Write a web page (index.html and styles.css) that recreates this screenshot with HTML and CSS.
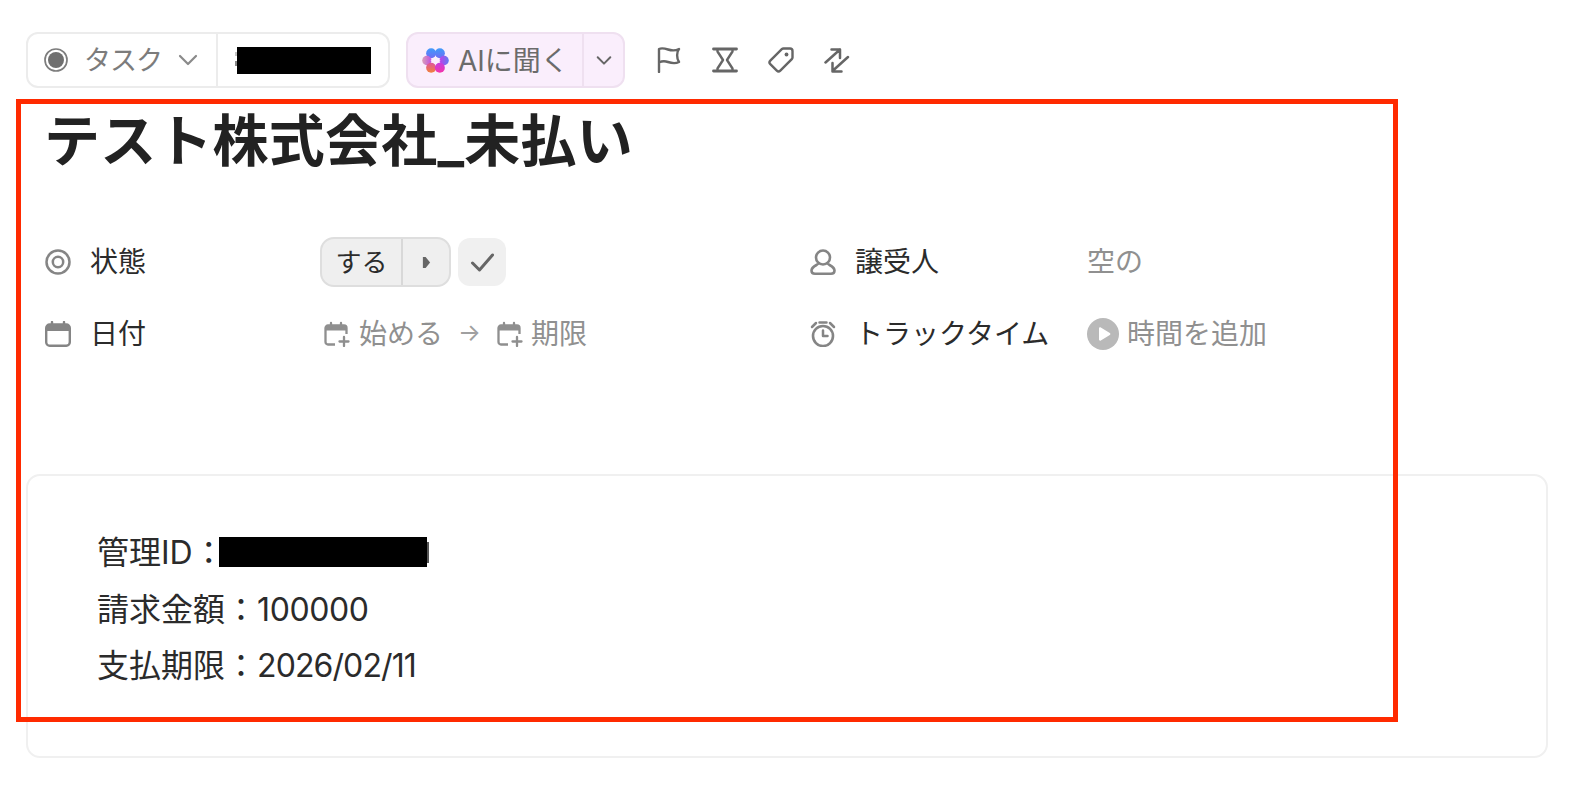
FILE: index.html
```html
<!DOCTYPE html>
<html lang="ja">

<head>
    <meta charset="UTF-8">
    <title>テスト株式会社_未払い</title>
    <link rel="stylesheet" href="styles.css">
</head>

<body>
    <div class="page">
        <div class="toolbar">
            <div class="group">
                <div class="group-main type-part">
                    <svg class="type-icon" viewBox="0 0 24 24"><circle cx="12" cy="12" r="11" fill="none" stroke="#7d7d7d" stroke-width="1.7"/><circle cx="12" cy="12" r="8" fill="#6f6f6f"/></svg>
                    <span class="type-text">タスク</span>
                    <svg class="chevron" viewBox="0 0 22 22"><path d="M3 7l8 8 8-8" fill="none" stroke="#8a8a8a" stroke-width="2.2" stroke-linecap="round" stroke-linejoin="round"/></svg>
                </div>
                <div class="group-id"><span class="redact redact-id"></span></div>
            </div>

            <div class="group group-ai">
                <div class="group-main ai-part">
                    <svg class="ai-icon" viewBox="0 0 28 28">
                        <defs>
                            <linearGradient id="petal-top" x1="0" y1="0" x2="0" y2="1"><stop offset="0" stop-color="#3f9bfa"/><stop offset="1" stop-color="#6f6cf5"/></linearGradient>
                            <linearGradient id="petal-left" x1="0" y1="0" x2="1" y2="0"><stop offset="0" stop-color="#d9a0b8"/><stop offset="1" stop-color="#c04fe0"/></linearGradient>
                            <linearGradient id="petal-right" x1="0" y1="0" x2="1" y2="0"><stop offset="0" stop-color="#c23fe8"/><stop offset="1" stop-color="#5f7cf2"/></linearGradient>
                            <linearGradient id="petal-low" x1="0" y1="0" x2="0" y2="1"><stop offset="0" stop-color="#e0559c"/><stop offset="1" stop-color="#f0823a"/></linearGradient>
                            <linearGradient id="petal-mag" x1="0" y1="0" x2="0" y2="1"><stop offset="0" stop-color="#c43fe0"/><stop offset="1" stop-color="#f534a8"/></linearGradient>
                            <filter id="soft"><feGaussianBlur stdDeviation="0.5"/></filter>
                        </defs>
                        <g filter="url(#soft)">
                            <circle cx="9.5" cy="6.5" r="5.2" fill="url(#petal-top)"/>
                            <circle cx="18.5" cy="6.5" r="5.2" fill="url(#petal-top)"/>
                            <circle cx="5" cy="14" r="4.8" fill="url(#petal-left)"/>
                            <circle cx="23" cy="14" r="4.8" fill="url(#petal-right)"/>
                            <circle cx="9.5" cy="21.5" r="5.2" fill="url(#petal-low)"/>
                            <circle cx="18.5" cy="21.5" r="5.2" fill="url(#petal-mag)"/>
                            <path d="M14 8.5c.6 3.2 2.3 4.9 5.5 5.5-3.2.6-4.9 2.3-5.5 5.5-.6-3.2-2.3-4.9-5.5-5.5 3.2-.6 4.9-2.3 5.5-5.5z" fill="#fbeefc"/>
                        </g>
                    </svg>
                    <span class="ai-text">AIに聞く</span>
                </div>
                <div class="ai-more">
                    <svg class="chevron-sm" viewBox="0 0 20 20"><path d="M3 7l7 7 7-7" fill="none" stroke="#666" stroke-width="2.2" stroke-linecap="round" stroke-linejoin="round"/></svg>
                </div>
            </div>

            <div class="tool-icons">
                <svg class="tool" viewBox="0 0 26 26"><path d="M3 25V2c3-1.500 6-.5 9 .5s8 1 11-.5c-2.500 3-2.500 9 0 13-3 1.500-8 1-11 0s-6-1-9 .5" fill="none" stroke="#666" stroke-width="2.400" stroke-linecap="round" stroke-linejoin="round"/></svg>
                <svg class="tool" viewBox="0 0 26 26"><path d="M1.500 2h23M1.500 24h23" fill="none" stroke="#666" stroke-width="2.800" stroke-linecap="round"/><path d="M5.500 2v2.500L11 13l-5.500 8.500V24M20.500 2v2.500L15 13l5.500 8.500V24" fill="none" stroke="#666" stroke-width="2.400" stroke-linejoin="round"/></svg>
                <svg class="tool" viewBox="0 0 26 26"><path d="M15.500 1.500h6.500a2.500 2.500 0 0 1 2.500 2.500v6.500a2.500 2.500 0 0 1-.7 1.700L12.300 23.700a2.500 2.500 0 0 1-3.500 0l-6.500-6.500a2.500 2.500 0 0 1 0-3.500L13.800 2.200a2.500 2.500 0 0 1 1.700-.7z" fill="none" stroke="#666" stroke-width="2.400" stroke-linejoin="round"/><circle cx="18.500" cy="7.500" r="1.900" fill="#666"/></svg>
                <svg class="tool" viewBox="0 0 26 26"><path d="M1.500 15.500L16 2.500M7.500 2.500H16V11M24 10L8.500 24M8.500 16V24.500H17.500" fill="none" stroke="#666" stroke-width="2.500" stroke-linecap="round" stroke-linejoin="round"/></svg>
            </div>
        </div>

        <h1 class="title">テスト株式会社_未払い</h1>

        <div class="props">
            <div class="prop-label">
                <svg class="prop-icon" viewBox="0 0 26 26"><circle cx="13" cy="13" r="11.500" fill="none" stroke="#858585" stroke-width="2.500"/><circle cx="13" cy="13" r="5.200" fill="none" stroke="#858585" stroke-width="2.500"/></svg>
                <span class="prop-text">状態</span>
            </div>
            <div class="prop-value">
                <div class="status-pill">
                    <span class="status-text"><span class="prop-text">する</span></span>
                    <span class="status-next"><svg class="next-icon" viewBox="0 0 10 12"><path d="M1 0h3l5 6-5 6H1z" fill="#666"/></svg></span>
                </div>
                <div class="status-check">
                    <svg class="check-icon" viewBox="0 0 24 20"><path d="M2 11l7 7L22 3" fill="none" stroke="#666" stroke-width="3" stroke-linecap="round" stroke-linejoin="round"/></svg>
                </div>
            </div>
            <div class="prop-label">
                <svg class="prop-icon" viewBox="0 0 26 26"><circle cx="13" cy="8.500" r="7" fill="none" stroke="#858585" stroke-width="2.600"/><path d="M8.500 14c.2 2-7 3-7 7.500 0 2 1 3.200 3.500 3.200h16c2.500 0 3.500-1.200 3.500-3.200 0-4.500-7.200-5.500-7-7.500" fill="none" stroke="#858585" stroke-width="2.600"/></svg>
                <span class="prop-text">譲受人</span>
            </div>
            <div class="prop-value muted"><span class="prop-text">空の</span></div>

            <div class="prop-label">
                <svg class="prop-icon" viewBox="0 0 26 26"><rect x="1.200" y="3.500" width="23.600" height="21.300" rx="3.500" fill="none" stroke="#858585" stroke-width="2.400"/><path d="M1.500 7a3.500 3.500 0 0 1 3.500-3.500h16A3.500 3.500 0 0 1 24.500 7v3h-23z" fill="#858585"/><path d="M7 1v4M19 1v4" stroke="#858585" stroke-width="2.400" stroke-linecap="round"/></svg>
                <span class="prop-text">日付</span>
            </div>
            <div class="prop-value muted">
                <svg class="date-icon date-icon-first" viewBox="0 0 26 26"><path d="M11 23.500H4a2.500 2.500 0 0 1-2.500-2.500V7A2.500 2.500 0 0 1 4 4.500h16A2.500 2.500 0 0 1 22.500 7v6" fill="none" stroke="#8f8f8f" stroke-width="2.300"/><path d="M2 5h20v4.500H2z" fill="#8f8f8f"/><path d="M7 2v4M17 2v4M20 16v9M15.500 20.500h9" stroke="#8f8f8f" stroke-width="2.300" stroke-linecap="round"/></svg>
                <span class="prop-text date-start">始める</span>
                <span class="prop-text date-arrow">→</span>
                <svg class="date-icon" viewBox="0 0 26 26"><path d="M11 23.500H4a2.500 2.500 0 0 1-2.500-2.500V7A2.500 2.500 0 0 1 4 4.500h16A2.500 2.500 0 0 1 22.500 7v6" fill="none" stroke="#8f8f8f" stroke-width="2.300"/><path d="M2 5h20v4.500H2z" fill="#8f8f8f"/><path d="M7 2v4M17 2v4M20 16v9M15.500 20.500h9" stroke="#8f8f8f" stroke-width="2.300" stroke-linecap="round"/></svg>
                <span class="prop-text">期限</span>
            </div>
            <div class="prop-label">
                <svg class="prop-icon" viewBox="0 0 26 26"><circle cx="13" cy="15" r="10" fill="none" stroke="#858585" stroke-width="2.600"/><path d="M13 9.500V15h4.500M2 6l4-4M24 6l-4-4M9.500 1.500h7" fill="none" stroke="#858585" stroke-width="2.500" stroke-linecap="round" stroke-linejoin="round"/></svg>
                <span class="prop-text">トラックタイム</span>
            </div>
            <div class="prop-value muted">
                <svg class="play-icon" viewBox="0 0 32 32"><circle cx="16" cy="16" r="16" fill="#b9b9b9"/><path d="M12 10.500c0-1 1-1.500 1.800-1l9 5.500c.8.5.8 1.500 0 2l-9 5.500c-.8.5-1.800 0-1.800-1z" fill="#fff"/></svg>
                <span class="prop-text">時間を追加</span>
            </div>
        </div>

        <div class="card">
            <p class="card-line">管理ID：<span class="redact redact-manage"></span></p>
            <p class="card-line">請求金額：<span class="amount">100000</span></p>
            <p class="card-line">支払期限：<span class="due">2026/02/11</span></p>
        </div>
    </div>

    <!-- red marker drawn over the screenshot -->
    <div class="marker"></div>
</body>

</html>
```

FILE: styles.css
```css
html,
body {
    margin: 0;
    height: 100%;
    overflow: hidden;
    background: #fff;
}

body {
    font-family: Inter, "Noto Sans CJK JP", sans-serif;
    color: #2b2b2b;
    position: relative;
}

.page {
    padding: 32px 28px 0 26px;
}

.toolbar {
    display: flex;
    align-items: center;
    height: 56px;
}

.group {
    display: flex;
    height: 56px;
    box-sizing: border-box;
    border: 2px solid #ececec;
    border-radius: 12px;
    font-size: 27px;
    color: #7c7c7c;
}

.group-main {
    display: flex;
    align-items: center;
}

.type-part {
    width: 190px;
    padding-left: 16px;
    box-sizing: border-box;
    border-right: 2px solid #ececec;
}

.type-icon {
    width: 24px;
    height: 24px;
    margin-right: 16px;
}

.type-text {
    letter-spacing: -1px;
    padding-bottom: 3px;
}

.chevron {
    width: 22px;
    height: 22px;
    margin-left: 15px;
}

.group-id {
    position: relative;
    width: 170px;
    display: flex;
    align-items: center;
    padding-left: 19px;
    box-sizing: border-box;
}

.redact {
    position: relative;
    display: inline-block;
    background: #000;
}

.redact-id {
    width: 134px;
    height: 27px;
}

/* bit of the hidden name showing past the black box */
.redact-id::before {
    content: "";
    position: absolute;
    left: -2px;
    top: 5px;
    width: 2px;
    height: 14px;
    background: linear-gradient(#c4c4c4 30%, #fff 30%, #fff 65%, #888 65%);
}

.group-ai {
    margin-left: 16px;
    width: 219px;
    background: #faeefc;
    border-color: #efe0f0;
    color: #6b6b6b;
    font-size: 28px;
}

.ai-part {
    width: 176px;
    padding-left: 14px;
    box-sizing: border-box;
    border-right: 2px solid #efe0f0;
}

.ai-text {
    padding-bottom: 3px;
}

.ai-icon {
    width: 27px;
    height: 27px;
    margin-right: 9px;
}

.ai-more {
    flex: 1;
    display: flex;
    align-items: center;
    justify-content: center;
}

.chevron-sm {
    width: 18px;
    height: 18px;
}

.tool-icons {
    display: flex;
    gap: 30px;
    margin-left: 31px;
}

.tool {
    width: 26px;
    height: 26px;
}

.title {
    margin: 13px 0 0 18px;
    font-size: 56px;
    line-height: 80px;
    font-weight: 700;
    letter-spacing: 0.2px;
    color: #222;
}

.props {
    display: grid;
    grid-template-columns: 275px 490px 277px 1fr;
    grid-auto-rows: 72px;
    margin: 45px 0 0 19px;
    font-size: 28px;
}

.prop-label {
    display: flex;
    align-items: center;
}

.prop-icon {
    width: 26px;
    height: 26px;
    margin-right: 19px;
}

.prop-text {
    padding-bottom: 4px;
}

.prop-value {
    display: flex;
    align-items: center;
}

.muted {
    color: #909090;
}

.status-pill {
    display: flex;
    height: 50px;
    width: 131px;
    box-sizing: border-box;
    background: #efefef;
    border: 2px solid #dedede;
    border-radius: 14px;
    color: #2b2b2b;
    font-size: 26px;
}

.status-text {
    width: 81px;
    box-sizing: border-box;
    border-right: 2px solid #d8d8d8;
    display: flex;
    align-items: center;
    justify-content: center;
}

.status-next {
    flex: 1;
    display: flex;
    align-items: center;
    justify-content: center;
}

.next-icon {
    width: 9px;
    height: 11px;
}

.status-check {
    width: 48px;
    height: 48px;
    margin-left: 7px;
    background: #f0f0f0;
    border-radius: 12px;
    display: flex;
    align-items: center;
    justify-content: center;
}

.check-icon {
    width: 25px;
    height: 20px;
}

.date-icon {
    width: 26px;
    height: 26px;
    margin-right: 8px;
}

.date-icon-first {
    margin-left: 4px;
    margin-right: 9px;
}

.date-start {
    margin-right: 15px;
}

.date-arrow {
    font-size: 24px;
    margin-right: 16px;
    color: #a0a0a0;
}

.play-icon {
    width: 32px;
    height: 32px;
    margin-right: 8px;
}

.card {
    margin-top: 104px;
    height: 284px;
    box-sizing: border-box;
    border: 2px solid #f0f0f0;
    border-radius: 14px;
    padding: 49px 0 0 69px;
    font-size: 32px;
    color: #2b2b2b;
}

.card-line {
    margin: 0;
    height: 56.5px;
    line-height: 56.5px;
    white-space: nowrap;
}

.amount {
    letter-spacing: -0.4px;
}

.due {
    letter-spacing: -0.9px;
}

.redact-manage {
    width: 208px;
    height: 30px;
    margin-left: -6px;
    vertical-align: -3px;
}

.redact-manage::after {
    content: "";
    position: absolute;
    right: -2px;
    top: 5px;
    width: 2px;
    height: 21px;
    background: #555;
}

.marker {
    position: absolute;
    left: 16px;
    top: 99px;
    width: 1382px;
    height: 623px;
    box-sizing: border-box;
    border: 5px solid #ff2a00;
}
```
